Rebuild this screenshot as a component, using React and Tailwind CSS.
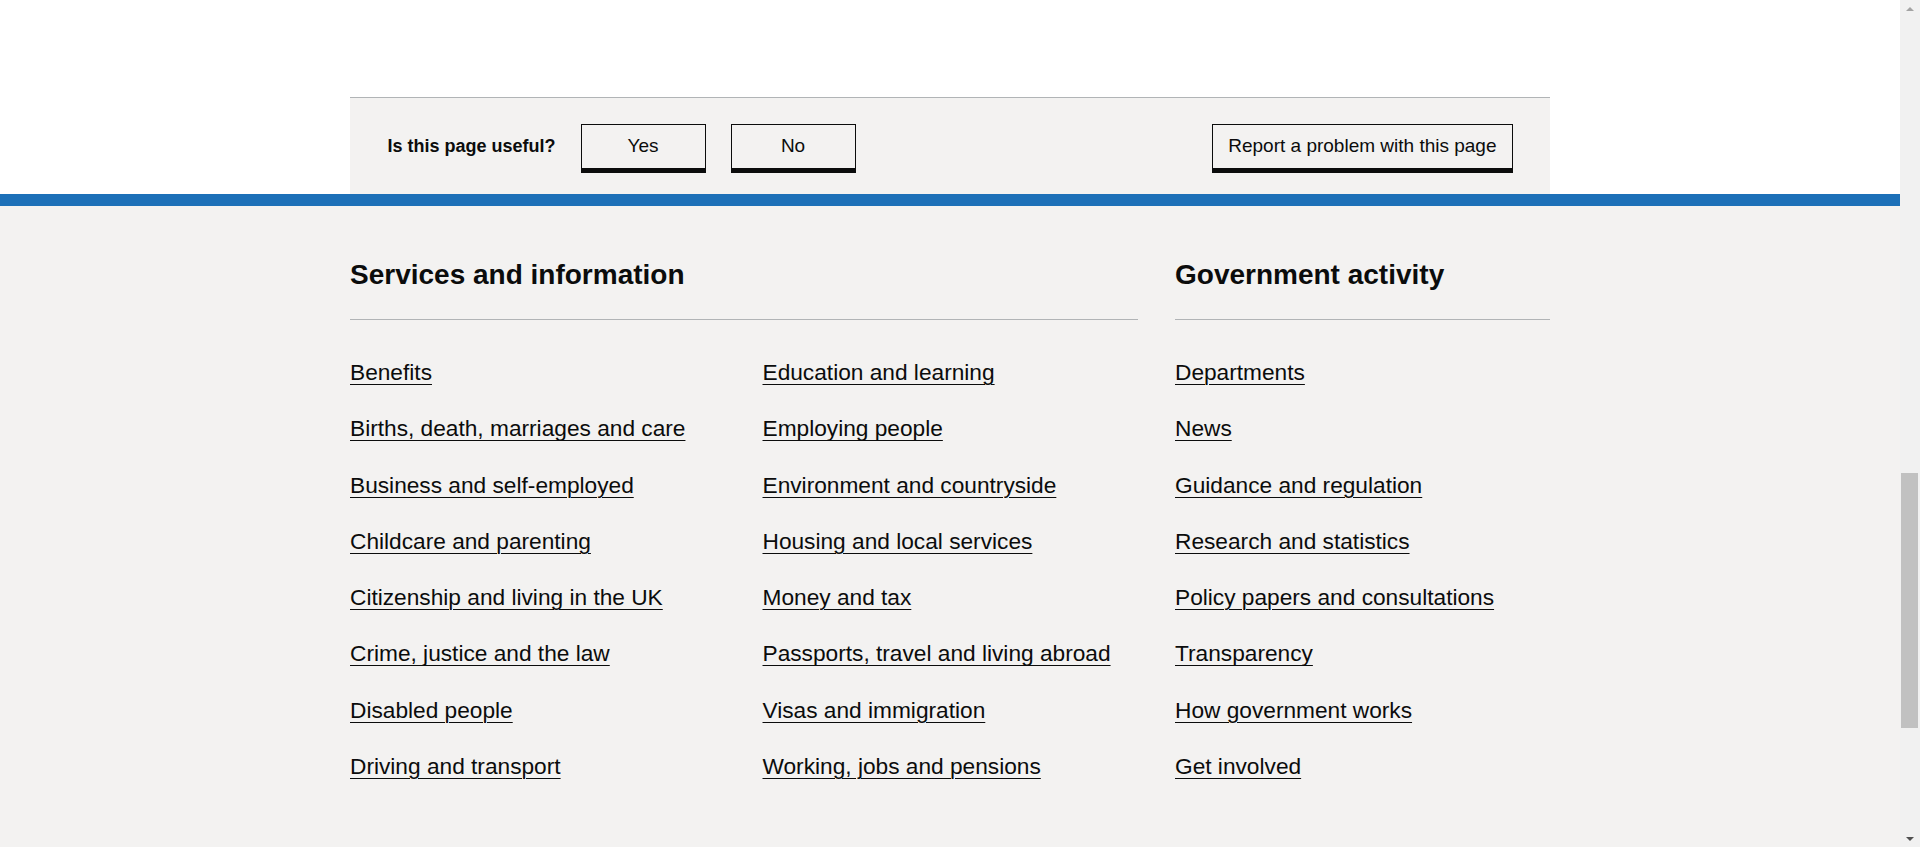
import React from 'react';

const SERVICES = [
  'Benefits',
  'Births, death, marriages and care',
  'Business and self-employed',
  'Childcare and parenting',
  'Citizenship and living in the UK',
  'Crime, justice and the law',
  'Disabled people',
  'Driving and transport',
  'Education and learning',
  'Employing people',
  'Environment and countryside',
  'Housing and local services',
  'Money and tax',
  'Passports, travel and living abroad',
  'Visas and immigration',
  'Working, jobs and pensions',
];

const GOVERNMENT = [
  'Departments',
  'News',
  'Guidance and regulation',
  'Research and statistics',
  'Policy papers and consultations',
  'Transparency',
  'How government works',
  'Get involved',
];

function FooterLink({ children }) {
  return (
    <li>
      <a
        href="#"
        className="text-[22.7px] leading-[31.25px] text-[#0b0c0c] underline decoration-1 underline-offset-[4px]"
      >
        {children}
      </a>
    </li>
  );
}

function FooterHeading({ children }) {
  return (
    <h2 className="text-[28px] leading-[37.5px] font-bold pb-[25px] border-b border-[#b1b4b6] mb-[37.5px]">
      {children}
    </h2>
  );
}

function FeedbackButton({ children, wide }) {
  return (
    <button
      className={`h-[45px] border border-[#0b0c0c] bg-[#f3f2f1] shadow-[0_4px_0_#0b0c0c] text-[19px] text-[#0b0c0c] ${wide ? 'px-[15px]' : 'w-[125px]'}`}
    >
      {children}
    </button>
  );
}

export default function App() {
  return (
    <div className="min-h-screen flex font-['Liberation_Sans',Arial,sans-serif] text-[#0b0c0c] bg-white">
      <div className="flex-1 min-w-0 flex flex-col">
        <div className="bg-white pt-[97px]">
          <div className="ml-[350px] w-[1200px] h-[97px] bg-[#f3f2f1] border-t border-[#b1b4b6] px-[37.5px] flex items-center">
            <span className="text-[18px] font-bold mr-[25px]">Is this page useful?</span>
            <div className="flex gap-[25px]">
              <FeedbackButton>Yes</FeedbackButton>
              <FeedbackButton>No</FeedbackButton>
            </div>
            <div className="ml-auto">
              <FeedbackButton wide>Report a problem with this page</FeedbackButton>
            </div>
          </div>
        </div>
        <div className="h-[12px] bg-[#1d70b8]" />
        <footer className="flex-1 bg-[#f3f2f1] pt-[50px]">
          <div className="ml-[350px] w-[1200px] flex gap-[37.5px]">
            <div className="w-[787.5px]">
              <FooterHeading>Services and information</FooterHeading>
              <ul className="grid grid-cols-2 grid-rows-8 grid-flow-col gap-x-[37.5px] gap-y-[25px]">
                {SERVICES.map(s => <FooterLink key={s}>{s}</FooterLink>)}
              </ul>
            </div>
            <div className="w-[375px]">
              <FooterHeading>Government activity</FooterHeading>
              <ul className="flex flex-col gap-[25px]">
                {GOVERNMENT.map(s => <FooterLink key={s}>{s}</FooterLink>)}
              </ul>
            </div>
          </div>
        </footer>
      </div>

      {/* page scrollbar */}
      <div className="w-[20px] bg-[#f1f1f1] flex flex-col items-center">
        <div className="h-[17px] flex items-center justify-center">
          <div className="w-0 h-0 border-l-[4.5px] border-r-[4.5px] border-b-[4px] border-l-transparent border-r-transparent border-b-[#a3a3a3]" />
        </div>
        <div className="flex-1 w-full flex flex-col pl-[1px] pr-[2px]">
          <div className="h-[456px]" />
          <div className="h-[255px] bg-[#c1c1c1]" />
        </div>
        <div className="h-[17px] flex items-center justify-center">
          <div className="w-0 h-0 border-l-[4.5px] border-r-[4.5px] border-t-[4px] border-l-transparent border-r-transparent border-t-[#505050]" />
        </div>
      </div>
    </div>
  );
}
